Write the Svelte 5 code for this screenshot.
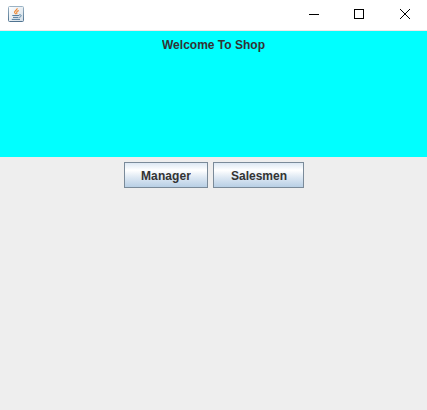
<script>
  const heading = 'Welcome To Shop';
  const roles = [
    { label: 'Manager', width: 84, text: 50 },
    { label: 'Salesmen', width: 91, text: 56 }
  ];
</script>

<div class="window">
  <header class="titlebar">
    <svg class="java" width="16" height="16" viewBox="0 0 16 16" aria-hidden="true">
      <defs>
        <linearGradient id="tile" x1="0" y1="0" x2="0" y2="1">
          <stop offset="0" stop-color="#9bb3c5" />
          <stop offset="1" stop-color="#4f7390" />
        </linearGradient>
        <linearGradient id="face" x1="0" y1="0" x2="1" y2="1">
          <stop offset="0" stop-color="#ffffff" />
          <stop offset="1" stop-color="#d3dfe8" />
        </linearGradient>
      </defs>
      <rect x="0.5" y="0.5" width="15" height="15" rx="1" fill="url(#face)" stroke="url(#tile)" />
      <path d="M9.3 2.3C9.2 4.3 6.3 4.8 6.6 6.3C6.8 7.1 7.6 7.6 7.9 8.2M10.8 4.6C9 5.1 8.3 6 8.8 6.8C9 7.3 8.9 7.7 8.6 8.1" fill="none" stroke="#f0842c" stroke-width="1.1" />
      <path d="M4.3 9.5H11.2M5 11.4H10.4M3.8 13.4H12" fill="none" stroke="#567f9f" stroke-width="1" />
      <path d="M11.2 8.8C14 8.3 13.8 10.8 11.2 11.4" fill="none" stroke="#567f9f" stroke-width="0.9" />
    </svg>
    <div class="controls">
      <svg width="46" height="30" viewBox="0 0 46 30"><path d="M18 14.5H28" stroke="#000" /></svg>
      <svg width="45" height="30" viewBox="0 0 45 30"><rect x="17.5" y="9.5" width="9" height="9" fill="none" stroke="#000" /></svg>
      <svg width="45" height="30" viewBox="0 0 45 30"><path d="M18 9L28 19M28 9L18 19" stroke="#000" stroke-width="1" /></svg>
    </div>
  </header>
  <section class="banner">
    <svg width="105" height="15"><text x="0" y="11" textLength="103">{heading}</text></svg>
  </section>
  <main class="actions">
    {#each roles as role}
      <button style="width: {role.width}px">
        <svg width={role.text} height="15"><text x="0" y="12" textLength={role.text}>{role.label}</text></svg>
      </button>
    {/each}
  </main>
</div>

<style>
  :global(body) {
    margin: 0;
    background: #eee;
  }
  .window {
    display: flex;
    flex-direction: column;
    width: 427px;
    height: 410px;
    overflow: hidden;
    background: #eee;
    font: bold 12px 'Liberation Sans', Arial, sans-serif;
  }
  svg {
    display: block;
    flex: none;
  }
  text {
    fill: #333;
  }
  .titlebar {
    display: flex;
    justify-content: space-between;
    box-sizing: border-box;
    height: 31px;
    background: #fff;
    border-bottom: 1px solid #f0e8e8;
  }
  .java {
    margin: 6px 0 0 8px;
  }
  .controls {
    display: flex;
  }
  .banner {
    display: flex;
    justify-content: center;
    box-sizing: border-box;
    height: 126px;
    padding-top: 7px;
    background: #0ff;
  }
  .banner svg {
    margin-left: 1px;
  }
  .actions {
    display: flex;
    justify-content: center;
    gap: 5px;
    padding: 5px 0 0 1px;
  }
  button {
    display: flex;
    align-items: center;
    justify-content: center;
    box-sizing: border-box;
    height: 26px;
    padding: 0;
    border: 1px solid #7a8a99;
    border-radius: 0;
    background: linear-gradient(#dde8f3 0%, #fff 30%, #dde8f3 60%, #b8cfe5 100%);
    font: inherit;
  }
</style>
